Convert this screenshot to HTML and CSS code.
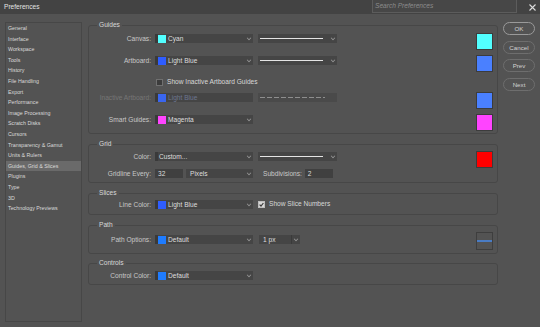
FILE: index.html
```html
<!DOCTYPE html>
<html lang="en">
<head>
    <meta charset="UTF-8">
    <title>Preferences</title>
    <link rel="stylesheet" href="styles.css">
</head>
<body>
    <div class="titlebar">
        <span class="title">Preferences</span>
        <div class="search">Search Preferences</div>
        <svg class="close" width="7" height="7" viewBox="0 0 7 7"><path d="M0.5 0.5 L6.5 6.5 M6.5 0.5 L0.5 6.5" stroke="#dcdcdc" stroke-width="1.1"/></svg>
    </div>

    <div class="main">
        <ul class="sidebar">
            <li>General</li>
            <li>Interface</li>
            <li>Workspace</li>
            <li>Tools</li>
            <li>History</li>
            <li>File Handling</li>
            <li>Export</li>
            <li>Performance</li>
            <li>Image Processing</li>
            <li>Scratch Disks</li>
            <li>Cursors</li>
            <li>Transparency &amp; Gamut</li>
            <li>Units &amp; Rulers</li>
            <li class="active">Guides, Grid &amp; Slices</li>
            <li>Plugins</li>
            <li>Type</li>
            <li>3D</li>
            <li>Technology Previews</li>
        </ul>

        <div class="content">
            <fieldset class="group guides">
                <legend>Guides</legend>
                <div class="row tall">
                    <label class="lbl">Canvas:</label>
                    <div class="select color-select"><span class="chip cyan"></span><span class="val">Cyan</span><span class="chev"></span></div>
                    <div class="select line-select"><span class="line"></span><span class="chev"></span></div>
                    <span class="swatch cyan"></span>
                </div>
                <div class="row tall">
                    <label class="lbl">Artboard:</label>
                    <div class="select color-select"><span class="chip lightblue"></span><span class="val">Light Blue</span><span class="chev"></span></div>
                    <div class="select line-select"><span class="line"></span><span class="chev"></span></div>
                    <span class="swatch lightblue-big"></span>
                </div>
                <div class="row check-row">
                    <span class="checkbox"></span>
                    <span class="check-text">Show Inactive Artboard Guides</span>
                </div>
                <div class="row tall disabled">
                    <label class="lbl">Inactive Artboard:</label>
                    <div class="select color-select"><span class="chip lightblue"></span><span class="val">Light Blue</span></div>
                    <div class="select line-select"><span class="line dashed"></span></div>
                    <span class="swatch lightblue-big"></span>
                </div>
                <div class="row tall last">
                    <label class="lbl">Smart Guides:</label>
                    <div class="select color-select"><span class="chip magenta"></span><span class="val">Magenta</span><span class="chev"></span></div>
                    <span class="swatch magenta"></span>
                </div>
            </fieldset>

            <fieldset class="group grid">
                <legend>Grid</legend>
                <div class="row tall short-gap">
                    <label class="lbl">Color:</label>
                    <div class="select color-select"><span class="val plain">Custom...</span><span class="chev"></span></div>
                    <div class="select line-select"><span class="line"></span><span class="chev"></span></div>
                    <span class="swatch red"></span>
                </div>
                <div class="row">
                    <label class="lbl">Gridline Every:</label>
                    <div class="input num">32</div>
                    <div class="select unit-select"><span class="val plain">Pixels</span><span class="chev"></span></div>
                    <label class="lbl inline">Subdivisions:</label>
                    <div class="input num">2</div>
                </div>
            </fieldset>

            <fieldset class="group slices">
                <legend>Slices</legend>
                <div class="row">
                    <label class="lbl">Line Color:</label>
                    <div class="select color-select"><span class="chip lightblue"></span><span class="val">Light Blue</span><span class="chev"></span></div>
                    <span class="checkbox checked">
                        <svg width="5" height="5" viewBox="0 0 5 5"><path d="M0.6 2.6 L2 4 L4.4 1" fill="none" stroke="#3a3a3a" stroke-width="1.2"/></svg>
                    </span>
                    <span class="check-text">Show Slice Numbers</span>
                </div>
            </fieldset>

            <fieldset class="group path">
                <legend>Path</legend>
                <div class="row path-row">
                    <label class="lbl">Path Options:</label>
                    <div class="select color-select"><span class="chip default"></span><span class="val">Default</span><span class="chev"></span></div>
                    <div class="combo"><span class="val plain">1 px</span><span class="combo-btn"><span class="chev"></span></span></div>
                    <span class="path-preview"><span></span></span>
                </div>
            </fieldset>

            <fieldset class="group controls">
                <legend>Controls</legend>
                <div class="row">
                    <label class="lbl">Control Color:</label>
                    <div class="select color-select"><span class="chip default"></span><span class="val">Default</span><span class="chev"></span></div>
                </div>
            </fieldset>
        </div>

        <div class="buttons">
            <button class="btn primary">OK</button>
            <button class="btn">Cancel</button>
            <button class="btn">Prev</button>
            <button class="btn">Next</button>
        </div>
    </div>
</body>
</html>
```

FILE: styles.css
```css
body {
    margin: 0;
    width: 540px;
    height: 327px;
    overflow: hidden;
    background-color: #535353;
    color: #d4d4d4;
    font-family: "Liberation Sans", Arial, sans-serif;
    font-size: 6.6px;
}

.titlebar {
    height: 14px;
    background-color: #434343;
    display: flex;
    align-items: flex-start;
}

.title {
    font-size: 6.6px;
    line-height: 14px;
    padding-left: 4px;
    color: #e2e2e2;
}

.search {
    margin-left: auto;
    width: 145px;
    height: 13px;
    box-sizing: border-box;
    background-color: #474747;
    border: 1px solid #5c5c5c;
    border-top: none;
    font-style: italic;
    color: #8c8c8c;
    line-height: 12px;
    padding-left: 2px;
}

.close {
    margin: 4px 4px 0 12px;
}

.main {
    display: flex;
    align-items: flex-start;
    padding-top: 7px;
}

/* left list */
.sidebar {
    list-style: none;
    margin: 1px 0 0 5px;
    padding: 0;
    width: 77px;
    height: 300px;
    box-sizing: border-box;
    border: 1px solid #474747;
    font-size: 5.3px;
    color: #dadada;
}

.sidebar li {
    height: 10.6px;
    line-height: 10.6px;
    padding-left: 2px;
    white-space: nowrap;
}

.sidebar li.active {
    background-color: #6a6a6a;
}

/* groups */
.content {
    margin-left: 6px;
    width: 410px;
}

.group {
    margin: 0 0 6px 0;
    padding: 4px 0 3px 0;
    border: 1px solid #474747;
    border-radius: 3px;
    min-width: 0;
}

.group legend {
    margin-left: 8px;
    padding: 0 2px;
    line-height: 8px;
    font-size: 6.6px;
    color: #d8d8d8;
}

.grid {
    padding: 3px 0 4px 0;
}

.slices {
    padding: 2px 0 5px 0;
}

.path {
    padding: 3px 0 3px 0;
    margin-bottom: 5px;
}

.controls {
    padding: 3px 0 4px 0;
}

.row {
    display: flex;
    align-items: flex-start;
    height: 10px;
}

.row.tall {
    height: 16px;
    margin-bottom: 6px;
}

.row.tall.last {
    margin-bottom: 0;
}

.row.short-gap {
    margin-bottom: 1px;
}

.row.path-row {
    height: 18px;
}

.path-row .lbl,
.path-row .select,
.path-row .combo {
    margin-top: 3px;
}

.lbl {
    width: 62px;
    margin-right: 4px;
    text-align: right;
    line-height: 9px;
    margin-top: 1px;
    color: #c8c8c8;
    white-space: nowrap;
}

.lbl.inline {
    width: auto;
    margin-left: 10px;
    margin-right: 3px;
}

.select {
    height: 9px;
    margin-top: 1px;
    background-color: #454545;
    display: flex;
    align-items: center;
    box-sizing: border-box;
}

.color-select {
    width: 98px;
    background: linear-gradient(to right, #3a3a3a 3px, #454545 3px);
}

.line-select {
    width: 79px;
    margin-left: 5px;
}

.unit-select {
    width: 67px;
    margin-left: 3px;
}

.chip {
    width: 8px;
    height: 8px;
    margin: 0 2px 0 3px;
}

.val {
    color: #dedede;
    line-height: 9px;
    white-space: nowrap;
}

.val.plain {
    padding-left: 4px;
}

.chev {
    margin-left: auto;
    margin-right: 2px;
    width: 3px;
    height: 3px;
    border-right: 1px solid #9a9a9a;
    border-bottom: 1px solid #9a9a9a;
    transform: translateY(-1px) rotate(45deg) scale(0.8);
}

.line {
    margin-left: 2px;
    width: 63px;
    height: 1px;
    background-color: #e4e4e4;
}

.line.dashed {
    width: 65px;
    background: repeating-linear-gradient(to right, #8e8e8e 0 5px, transparent 5px 7px);
}

.input {
    height: 9px;
    margin-top: 1px;
    box-sizing: border-box;
    background-color: #404040;
    color: #dedede;
    line-height: 9px;
    padding-left: 3px;
}

.input.num {
    width: 28px;
}

.swatch {
    margin-left: auto;
    margin-right: 4px;
    width: 17px;
    height: 17px;
    box-sizing: border-box;
    border: 1px solid #3c3c3c;
}

.cyan { background-color: #52ffff; }
.lightblue { background-color: #2f5dff; }
.lightblue-big { background-color: #4a80ff; }
.magenta { background-color: #ff44ff; }
.red { background-color: #ff0000; }
.default { background-color: #1f7cff; }

.check-row {
    padding-left: 67px;
    margin-bottom: 5px;
}

.checkbox {
    width: 7px;
    height: 7px;
    margin-top: 2px;
    box-sizing: border-box;
    background-color: #3c3c3c;
    border: 1px solid #707070;
    display: flex;
    align-items: center;
    justify-content: center;
}

.checkbox.checked {
    margin-left: 5px;
    background-color: #d8d8d8;
    border-color: #bdbdbd;
}

.check-text {
    margin-left: 4px;
    line-height: 10px;
    color: #d8d8d8;
    white-space: nowrap;
}

.disabled .lbl {
    color: #767676;
}

.disabled .val {
    color: #6c7590;
}

.disabled .select {
    background-color: #4a4a4a;
}

.disabled .chip {
    background-color: #3a66f0;
}

.combo {
    width: 41px;
    height: 9px;
    margin-left: 6px;
    display: flex;
    align-items: center;
    background-color: #454545;
}

.combo-btn {
    margin-left: auto;
    width: 8px;
    height: 9px;
    border-left: 1px solid #3a3a3a;
    display: flex;
    align-items: center;
}

.path-preview {
    margin-left: auto;
    margin-right: 4px;
    width: 17px;
    height: 18px;
    box-sizing: border-box;
    border: 1px solid #3e3e3e;
    display: flex;
    align-items: center;
}

.path-preview span {
    width: 100%;
    height: 1.5px;
    background-color: #4a7cc4;
}

/* right buttons */
.buttons {
    margin: 1px 0 0 5px;
    width: 32px;
    display: flex;
    flex-direction: column;
    gap: 5.5px;
}

.btn {
    height: 13px;
    padding: 0;
    border: 1px solid #6e6e6e;
    border-radius: 7px;
    background-color: #535353;
    color: #d2d2d2;
    font-family: "Liberation Sans", Arial, sans-serif;
    font-size: 6.2px;
}

.btn.primary {
    border-color: #9a9a9a;
}
```
